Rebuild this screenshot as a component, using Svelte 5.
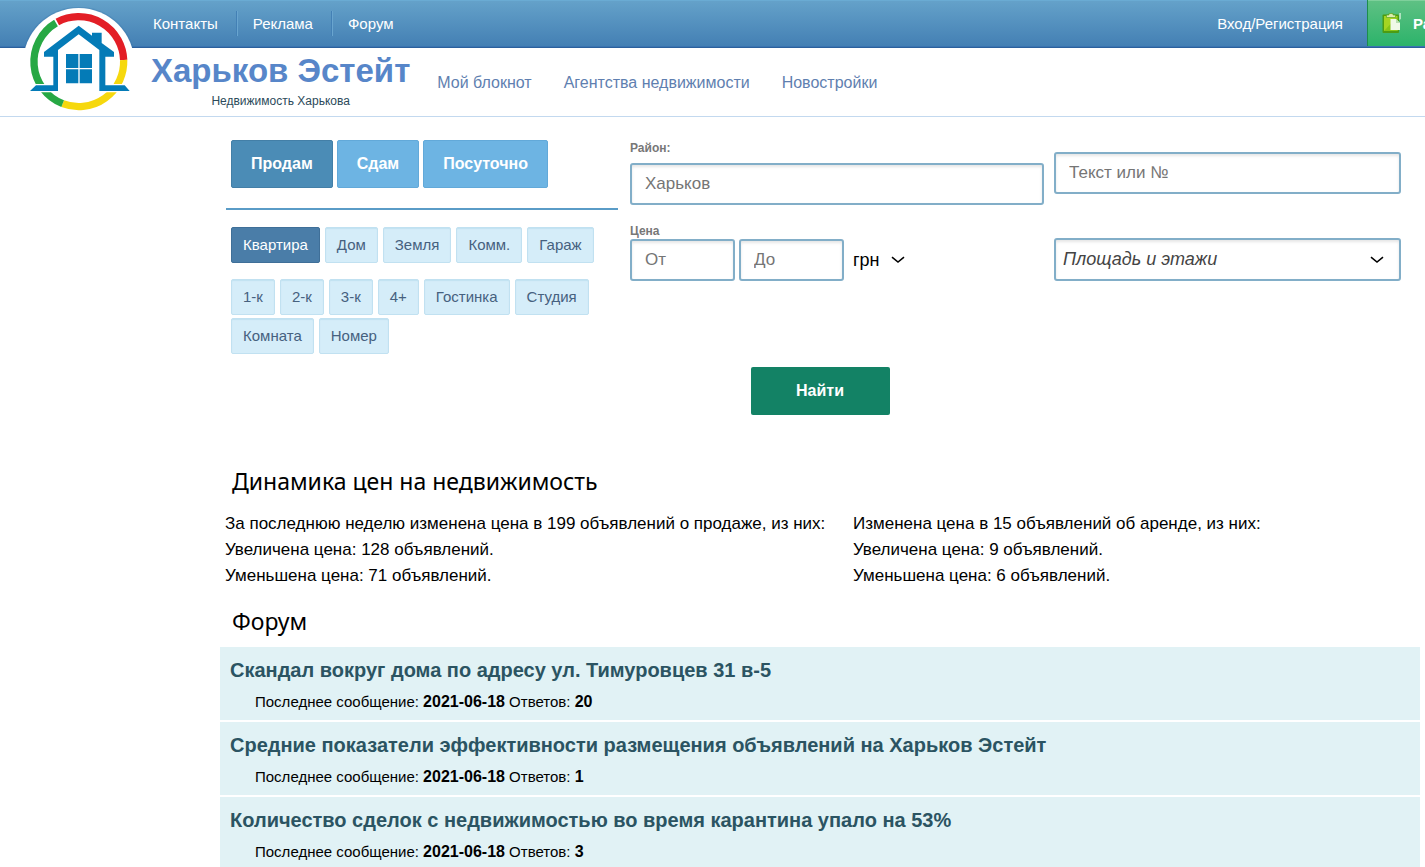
<script>
  const topLinks = ['Контакты', 'Реклама', 'Форум'];
  const siteLinks = ['Мой блокнот', 'Агентства недвижимости', 'Новостройки'];
  const deals = ['Продам', 'Сдам', 'Посуточно'];
  const kinds = ['Квартира', 'Дом', 'Земля', 'Комм.', 'Гараж'];
  const rooms = ['1-к', '2-к', '3-к', '4+', 'Гостинка', 'Студия', 'Комната', 'Номер'];
  const stats = [
    ['За последнюю неделю изменена цена в 199 объявлений о продаже, из них:', 'Увеличена цена: 128 объявлений.', 'Уменьшена цена: 71 объявлений.'],
    ['Изменена цена в 15 объявлений об аренде, из них:', 'Увеличена цена: 9 объявлений.', 'Уменьшена цена: 6 объявлений.']
  ];
  const topics = [
    { title: 'Скандал вокруг дома по адресу ул. Тимуровцев 31 в-5', date: '2021-06-18', replies: 20 },
    { title: 'Средние показатели эффективности размещения объявлений на Харьков Эстейт', date: '2021-06-18', replies: 1 },
    { title: 'Количество сделок с недвижимостью во время карантина упало на 53%', date: '2021-06-18', replies: 3 }
  ];
  let deal = $state('Продам');
  let kind = $state('Квартира');
  let room = $state('');
</script>

{#snippet chevron()}
  <svg class="chevron" viewBox="0 0 14 8" width="14" height="8" aria-hidden="true">
    <path d="M1 1.2 L7 6 L13 1.2" fill="none" stroke="#000" stroke-width="1.6" />
  </svg>
{/snippet}

<header>
  <div class="bar">
    <nav class="top-links">
      {#each topLinks as link}<a href="#top">{link}</a>{/each}
    </nav>
    <a class="login" href="#login">Вход/Регистрация</a>
    <a class="post" href="#post">
      <svg viewBox="0 0 19 21" width="19" height="21" aria-hidden="true">
        <rect x="0.500" y="1.500" width="16.500" height="18.500" rx="1" fill="#4c9c12" />
        <rect x="2" y="3" width="13.500" height="15" fill="#a5d422" />
        <path d="M2 18 L15 4 V18Z" fill="#86c417" />
        <path d="M4.500 2 H7 V0.500 H11 V2 H13.500 V4.500 H4.500Z" fill="#dcebb0" stroke="#5aa51c" stroke-width="0.700" />
        <path d="M8.500 6 H14 L18 10 V17 H8.500Z" fill="#f0f9e8" />
        <path d="M14 6 V10 H18Z" fill="#b9dfb0" />
        <path d="M17.500 0 H18.600 V6 L17.500 7Z" fill="#f4fbef" />
      </svg>
      <span>Ра</span>
    </a>
  </div>
  <div class="brand">
    <div class="name">
      <h1>Харьков Эстейт</h1>
      <p>Недвижимость Харькова</p>
    </div>
    <nav class="site-links">
      {#each siteLinks as link}<a href="#site">{link}</a>{/each}
    </nav>
  </div>
  <a class="logo" href="#home" aria-label="Харьков Эстейт">
    <svg viewBox="60 21 351 327" width="117" height="109" aria-hidden="true">
      <circle cx="236" cy="191" r="171" fill="#2f6aa3" fill-opacity="0.250" />
      <circle cx="236" cy="191" r="167" fill="#fff" />
      <path d="M60 144 H411 V348 H60Z" fill="#fff" />
      <g fill="none" stroke-width="22">
        <path d="M172 66 A135 135 0 0 1 371 180" stroke="#e31e26" />
        <path d="M371 180 A135 135 0 0 1 188 311" stroke="#f6d80d" />
        <path d="M188 311 A135 135 0 0 1 168 69" stroke="#27a844" />
      </g>
      <path d="M80 252 H400 V277 H80Z" fill="#fff" />
      <path d="M132 156 L236 77 L276 107 V98 H305 V129 L342 156 V170 H316 V256 H374 L389 273 H298 V150 L236 103 L174 150 V273 H90 L108 256 H160 V170 H132Z" fill="#047bb7" stroke="#fff" stroke-width="6" paint-order="stroke" />
      <path d="M198 162 H235 V204 H198Z M239 162 H276 V204 H239Z M198 208 H235 V250 H198Z M239 208 H276 V250 H239Z" fill="#047bb7" />
    </svg>
  </a>
</header>

<main>
  <form onsubmit={(e) => e.preventDefault()}>
    <div class="fields">
      <div class="filters">
        <div class="deals">
          {#each deals as d}
            <button type="button" class:active={deal === d} onclick={() => (deal = d)}>{d}</button>
          {/each}
        </div>
        <div class="chips">
          {#each kinds as k}
            <button type="button" class:active={kind === k} onclick={() => (kind = k)}>{k}</button>
          {/each}
        </div>
        <div class="chips">
          {#each rooms as r}
            <button type="button" class:active={room === r} onclick={() => (room = r)}>{r}</button>
          {/each}
        </div>
      </div>
      <div class="place">
        <label for="district">Район:</label>
        <input id="district" type="text" placeholder="Харьков" />
        <label for="from">Цена</label>
        <div class="price">
          <input id="from" type="text" placeholder="От" />
          <input type="text" placeholder="До" aria-label="Цена до" />
          <div class="select currency">
            <select aria-label="Валюта"><option>грн</option></select>
            {@render chevron()}
          </div>
        </div>
      </div>
      <div class="extra">
        <input type="text" placeholder="Текст или №" aria-label="Текст или №" />
        <div class="select area">
          <select aria-label="Площадь и этажи"><option>Площадь и этажи</option></select>
          {@render chevron()}
        </div>
      </div>
    </div>
    <button class="find" type="submit">Найти</button>
  </form>

  <h2>Динамика цен на недвижимость</h2>
  <div class="stats">
    {#each stats as lines}
      <div>
        {#each lines as line}<p>{line}</p>{/each}
      </div>
    {/each}
  </div>

  <h2>Форум</h2>
  <div class="forum">
    {#each topics as t}
      <article>
        <h3><a href="#topic">{t.title}</a></h3>
        <p>Последнее сообщение: <b>{t.date}</b> Ответов: <b>{t.replies}</b></p>
      </article>
    {/each}
  </div>
</main>

<style>
  :global(body) {
    background: #fff;
    font-family: 'Liberation Sans', Arial, sans-serif;
  }
  :global(#app) { height: 100vh; overflow: hidden; }
  a { text-decoration: none; color: inherit; }
  h1, h2, h3, p { margin: 0; }
  button, input, select { font-family: inherit; margin: 0; box-sizing: border-box; }

  header { position: relative; border-bottom: 1px solid #c3d9ef; }
  .bar {
    display: flex;
    height: 48px;
    box-sizing: border-box;
    padding: 0 0 1px 138px;
    overflow: hidden;
    border-bottom: 1px solid #2b609c;
    background: linear-gradient(#65a2ca, #437fb3);
    box-shadow: inset 0 1px #6aabd3, inset 0 -1px #3a74b0;
    color: #fff;
    font-size: 15px;
  }
  .top-links { display: flex; flex: 1; align-items: center; }
  .top-links a { padding: 0 19px 0 15px; line-height: 25px; }
  .top-links a + a { border-left: 1px solid #69a5cf; box-shadow: -1px 0 #4380b5; }
  .login { align-self: center; padding-right: 24px; }
  .post {
    display: flex;
    flex: none;
    align-items: center;
    gap: 12px;
    width: 58px;
    padding-left: 14px;
    box-sizing: border-box;
    border-left: 1px solid #1d8d4c;
    background: linear-gradient(#5fc184, #2cb36a);
    box-shadow: inset 0 1px #7ed09b;
    font-weight: bold;
    white-space: nowrap;
  }
  .post svg { flex: none; }
  .brand { display: flex; gap: 27px; height: 68px; padding-left: 151px; }
  .name { text-align: center; }
  h1 { font-size: 33px; line-height: 45px; color: #5786c9; }
  .name p { font-size: 12px; line-height: 16px; color: #2c4a5a; }
  .site-links { display: flex; gap: 32px; padding-top: 25px; font-size: 16px; line-height: 20px; color: #5f7fb0; }
  .logo { position: absolute; left: 20px; top: 7px; line-height: 0; }

  main { padding: 23px 5px 0 220px; }
  form { text-align: center; }
  .fields {
    display: grid;
    grid-template-columns: 392px minmax(0, 416fr) minmax(0, 347fr);
    column-gap: 10px;
    padding: 0 19px 0 6px;
    text-align: left;
  }
  .filters button { cursor: pointer; border-radius: 2px; }
  .deals { display: flex; gap: 4px; padding: 0 0 20px 5px; border-bottom: 2px solid #5a9cc7; margin-bottom: 17px; }
  .deals button {
    height: 48px;
    padding: 0 19px;
    border: 1px solid #62a9d9;
    background: #6db4e3;
    color: #fff;
    font-size: 16px;
    font-weight: bold;
  }
  .deals .active { background: #4b8cb6; border-color: #437fa7; }
  .chips { display: flex; flex-wrap: wrap; gap: 3px 5px; padding-left: 5px; margin-bottom: 16px; }
  .chips:last-child { margin-bottom: 13px; }
  .chips button {
    height: 36px;
    padding: 0 11px 1px;
    border: 1px solid #c1e1f1;
    background: #d5edf9;
    box-shadow: inset 0 1px 1px #c1e1f1;
    color: #46617f;
    font-size: 15px;
  }
  .chips .active { background: #4a7da8; border-color: #3f6f98; box-shadow: none; color: #fff; }

  label { display: block; font-size: 12px; line-height: 16px; font-weight: bold; color: #777; }
  .place { padding-left: 2px; }
  .place > input { width: 100%; margin: 7px 0 18px; }
  input {
    display: block;
    height: 42px;
    min-width: 0;
    padding: 0 13px 1px;
    border: 2px solid #82aec8;
    border-radius: 3px;
    box-shadow: inset 0 2px 3px rgba(0, 0, 0, 0.1);
    background: #fff;
    font-size: 17px;
  }
  input::placeholder { color: #757575; opacity: 1; }
  .price { display: flex; gap: 4px; }
  .price input { width: 105px; }
  .select { display: grid; align-items: center; }
  .select select {
    grid-area: 1 / 1;
    appearance: none;
    width: 100%;
    border: 0;
    background: transparent;
    font-size: 18px;
    color: #000;
    padding: 0;
  }
  .chevron { grid-area: 1 / 1; justify-self: end; pointer-events: none; }
  .currency { width: 52px; margin-left: 5px; }
  .extra input { width: 100%; margin: 12px 0 44px; }
  .select.area select {
    height: 43px;
    padding: 0 7px 1px;
    border: 2px solid #82aec8;
    border-radius: 3px;
    box-shadow: inset 0 2px 3px rgba(0, 0, 0, 0.1);
    font-style: italic;
    color: #444;
  }
  .area .chevron { margin-right: 17px; }
  .find {
    width: 139px;
    height: 48px;
    border: 0;
    border-radius: 2px;
    background: #138265;
    color: #fff;
    font-size: 16px;
    font-weight: bold;
    vertical-align: top;
  }

  h2 { padding-left: 12px; font: 400 23px/36px 'Noto Sans', 'Open Sans', sans-serif; }
  form + h2 { margin-top: 48px; }
  .stats {
    display: grid;
    grid-template-columns: 618px 1fr;
    column-gap: 10px;
    padding: 12px 0 14px 5px;
    font-size: 17px;
    line-height: 26px;
  }
  .forum { display: grid; gap: 2px; padding-top: 8px; }
  article { padding: 11px 10px 8px; background: #e1f2f5; }
  h3 { font-size: 20px; line-height: 24px; color: #2b5462; }
  article p { padding: 9px 0 0 25px; font-size: 15px; line-height: 21px; }
  article b { font-size: 16px; line-height: 16px; }
</style>
